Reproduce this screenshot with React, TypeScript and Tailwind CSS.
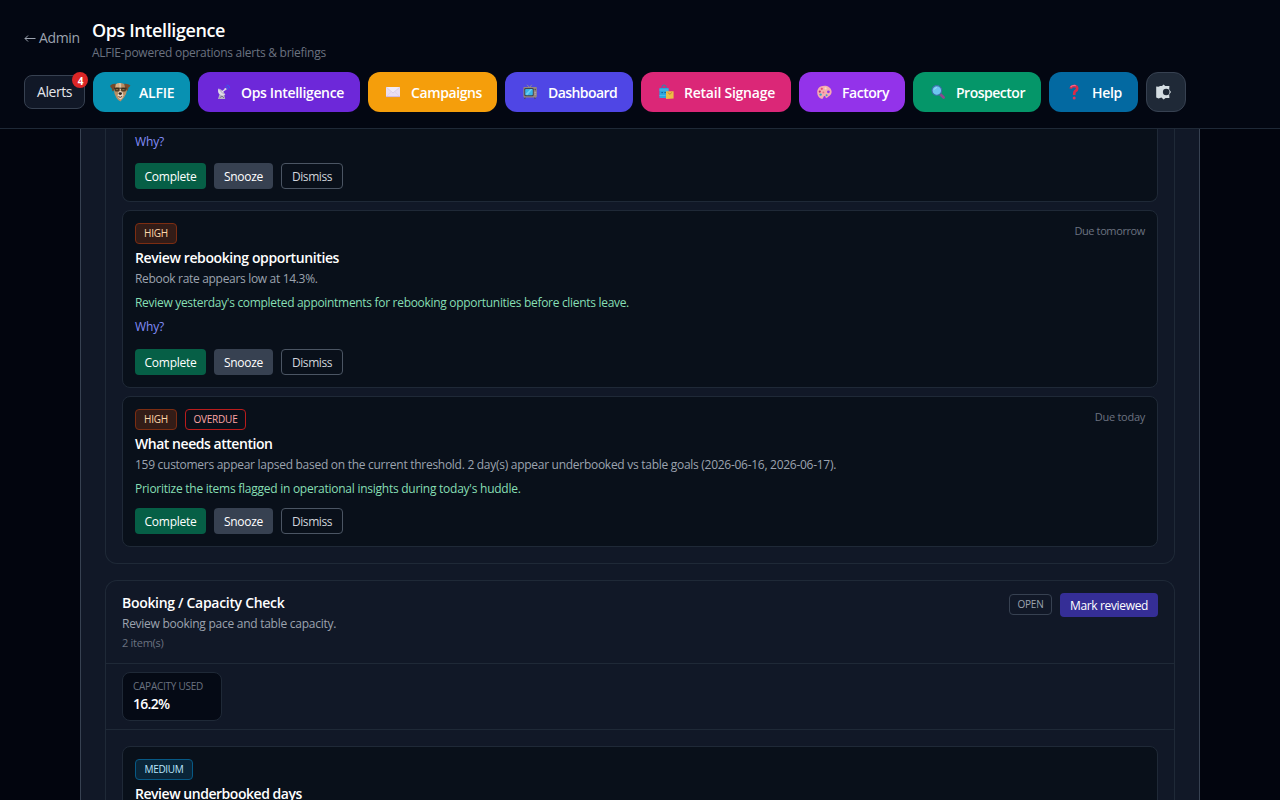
import { ReactNode } from 'react';
import clsx from 'clsx';

// Nav icons, all drawn on an 18px grid
function DogIcon() {
  return (
    <svg width="22" height="22" viewBox="0 0 22 22">
      <path d="M6.5 3.2 Q11 .8 15.5 3.2 L18 9 Q17.5 13.5 15 16.5 L11.5 20.6 Q9 19.5 7.5 17 Q5 13 5 9 Z" fill="#b98e63" />
      <path d="M6.6 3.4 Q8.4 2.2 10 2.2 L9.8 6.6 H5.8 Z" fill="#d9b185" />
      <path d="M10 2.2 Q11.2 1.8 12.2 2.4 L12 9.5 L10.4 9.5 Z" fill="#dcc7a8" />
      <path d="M6.7 2.8 Q3 2.4 1.1 4.8 Q1.4 6.4 2.6 7.2 L3.6 10.4 Q5.6 9.8 6.2 6.6 Z" fill="#73492b" />
      <path d="M15.2 2.8 Q19 2.2 21.4 4.6 Q20.6 6 19.6 6.6 L18.4 10 Q16.6 9 16 6.4 Z" fill="#7a4c2c" />
      <path d="M9.4 10.6 Q11.2 9.6 13.4 10.6 L14.4 14.4 Q13.6 17.6 11.6 18.6 Q9 17.6 8.6 14.8 Z" fill="#e6d6c2" />
      <rect x="5.6" y="6.8" width="5" height="3.6" rx="1.5" fill="#4d3d29" />
      <rect x="12" y="6.8" width="5" height="3.6" rx="1.5" fill="#4d3d29" />
      <path d="M5 7.2 H17.6" stroke="#2d2419" strokeWidth=".9" />
      <path d="M7 8.6 h2 M13.4 8.6 h2" stroke="#8d7a4b" strokeWidth=".9" />
      <ellipse cx="11.3" cy="12.6" rx="1.7" ry="1.3" fill="#2a211c" />
      <path d="M9.4 15.6 Q11.3 17.2 13.2 15.4" stroke="#5a3b2c" strokeWidth="1" fill="none" />
    </svg>
  );
}

function SatelliteIcon() {
  return (
    <svg width="18" height="18" viewBox="0 0 18 18">
      <path d="M5.6 11 L4 16 H11.2 L10 11 Z" fill="#b9b3c4" />
      <path d="M4.4 5.4 Q3.2 9.6 6 11.6 Q8.6 13.2 11.4 11.8 Z" fill="#e2dde9" />
      <path d="M4.6 5.6 Q8.6 6.6 11.2 11.6 Q7 11 4.6 5.6 Z" fill="#bcb5c9" />
      <path d="M8 9 L11 6.4" stroke="#e4e0ea" strokeWidth="1.3" />
      <circle cx="11.4" cy="6.2" r="1.1" fill="#d8d3e0" />
      <path d="M11.4 3.6 Q14 4 14 6.8 M12.6 2 Q15.6 2.2 15.8 5.2" stroke="#3b5bea" strokeWidth="1" fill="none" />
      <path d="M5.6 15 L8 13 L10 15" stroke="#6f667e" strokeWidth=".8" fill="none" />
    </svg>
  );
}

function EnvelopeIcon() {
  return (
    <svg width="18" height="18" viewBox="0 0 18 18">
      <rect x="2" y="4" width="14" height="10" fill="#e9def2" />
      <path d="M2 4 L9 10 L16 4" stroke="#d6c9e2" strokeWidth=".8" fill="#f1eaf6" />
      <path d="M2 14 L7 8.8 M16 14 L11 8.8" stroke="#dccfe8" strokeWidth=".7" />
      <path d="M2 13.6 H16" stroke="#cdb2de" strokeWidth=".9" />
    </svg>
  );
}

function TvIcon() {
  return (
    <svg width="18" height="18" viewBox="0 0 18 18">
      <path d="M6 1.8 L8.6 4.4 L10.8 1.8" stroke="#8f8f91" strokeWidth="1" fill="none" />
      <path d="M4.4 14 L3.6 16 M13.4 14 L14.2 16" stroke="#4b4b55" strokeWidth="1.2" />
      <rect x="2.4" y="4" width="13.4" height="10.4" rx=".8" fill="#96877f" />
      <rect x="3.3" y="4.9" width="9.4" height="8.4" rx="1.4" fill="#3f4250" />
      <rect x="4.2" y="5.9" width="7.6" height="6.4" rx=".8" fill="#37b5ea" />
      <path d="M4.6 11 L9.6 6 H11.4 L6.2 12.2 Z" fill="#6fd0f4" />
      <circle cx="14.2" cy="6.6" r=".8" fill="#55504f" />
      <path d="M13.4 9.4 h1.8 M13.4 11.2 h1.8" stroke="#c0b4ae" strokeWidth=".7" />
    </svg>
  );
}

function BagsIcon() {
  return (
    <svg width="18" height="18" viewBox="0 0 18 18">
      <path d="M5 5 V3.8 Q5 2 7 2 Q9 2 9 3.8 V5" stroke="#2488b8" strokeWidth="1" fill="none" />
      <path d="M2.4 5 H11.6 V15 H2.4 Z" fill="#2ba6dd" />
      <path d="M2.4 7 H11.6 M2.4 12.4 H8.6" stroke="#58bdea" strokeWidth=".9" />
      <path d="M4.4 9.6 h1.6 M7.4 9.6 h1.8" stroke="#175f93" strokeWidth="1" />
      <path d="M9 8.2 H16.6 V15.4 L9 16 Z" fill="#eebd45" />
      <path d="M11 9.4 Q12.8 13 14.6 9.4" stroke="#b98530" strokeWidth=".9" fill="none" />
    </svg>
  );
}

function PaletteIcon() {
  return (
    <svg width="18" height="18" viewBox="0 0 18 18">
      <path d="M9.4 2.8 C4.8 2.8 2.2 5.6 2.2 9.2 C2.2 13 4.8 15.8 7.2 15.8 C8.6 15.8 8 13.6 9.2 13 C10.2 12.6 10.8 13.6 10.6 14.6 C10.8 15.4 12 15 13.2 13.8 C15.2 12.4 17 10.8 16.6 8.2 C16 4.8 13 2.8 9.4 2.8 Z" fill="#f6acb0" />
      <circle cx="13.4" cy="8.8" r="1.4" fill="#9333ea" />
      <circle cx="10.6" cy="5.4" r="1.1" fill="#f5e2bd" />
      <circle cx="6.8" cy="5.8" r="1.1" fill="#e4487c" />
      <circle cx="4.8" cy="8.6" r="1.1" fill="#b92e6e" />
      <circle cx="5.6" cy="11.6" r="1.2" fill="#36a6c4" />
      <circle cx="8.4" cy="9.4" r=".9" fill="#e76d8b" />
      <circle cx="11.6" cy="12.2" r="1" fill="#3a9dc9" />
    </svg>
  );
}

function MagnifierIcon() {
  return (
    <svg width="18" height="18" viewBox="0 0 18 18">
      <path d="M11 11 L14.6 14.6" stroke="#8a4b8e" strokeWidth="2.8" strokeLinecap="round" />
      <circle cx="7.8" cy="7.4" r="4.8" fill="#6cc6f1" stroke="#3d6fa8" strokeWidth="1.1" />
      <path d="M5.2 6.6 Q6 4.8 7.8 4.6" stroke="#a6def8" strokeWidth="1" fill="none" />
    </svg>
  );
}

function QuestionIcon() {
  return (
    <svg width="18" height="18" viewBox="0 0 18 18">
      <path d="M5.8 5.6 Q6 3 9.2 3 Q12.2 3.1 12.2 5.4 Q12.2 7 10.4 8 Q9.2 8.7 9.2 12" stroke="#dc2a48" strokeWidth="2.7" fill="none" />
      <path d="M5.6 4 Q7.6 2 10.8 2.6" stroke="#ee6790" strokeWidth="1.2" fill="none" />
      <circle cx="9.2" cy="15" r="1.5" fill="#e2335a" />
    </svg>
  );
}

function ThemeIcon() {
  return (
    <svg width="18" height="18" viewBox="0 0 18 18">
      <path d="M1.2 3.6 L3.4 3.8 L5.2 3 L7 3 L8.6 1.4 L10.2 3 L14.4 3 L14.2 6.4 L16 9 L14.2 11.6 L14.4 15 L10.6 15 L8.6 16.4 L6.4 14.6 L3.6 15.4 L1.2 14.6 Z" fill="#d5dee3" />
      <circle cx="11.2" cy="9" r="3.3" fill="#1f2937" />
    </svg>
  );
}

const navItems = [
  { label: 'ALFIE', icon: <DogIcon />, box: 'w-[97px] bg-[#0891b2]', gap: 'gap-2', tracking: 'tracking-[-0.013em]' },
  { label: 'Ops Intelligence', icon: <SatelliteIcon />, box: 'w-[162px] bg-[#6d28d9]', gap: 'gap-[9px]', tracking: 'tracking-[-0.024em]' },
  { label: 'Campaigns', icon: <EnvelopeIcon />, box: 'w-[129px] bg-[#f59e0b]', gap: 'gap-[9px]', tracking: 'tracking-[-0.028em]' },
  { label: 'Dashboard', icon: <TvIcon />, box: 'w-[128px] bg-[#4f46e5]', gap: 'gap-[9px]', tracking: 'tracking-[-0.04em]' },
  { label: 'Retail Signage', icon: <BagsIcon />, box: 'w-[150px] bg-[#db2777]', gap: 'gap-[9px]', tracking: 'tracking-[-0.017em]' },
  { label: 'Factory', icon: <PaletteIcon />, box: 'w-[106px] bg-[#9333ea]', gap: 'gap-[9px]', tracking: 'tracking-[-0.032em]' },
  { label: 'Prospector', icon: <MagnifierIcon />, box: 'w-[128px] bg-[#059669]', gap: 'gap-[9px]', tracking: 'tracking-[-0.035em]' },
  { label: 'Help', icon: <QuestionIcon />, box: 'w-[89px] bg-[#0369a1]', gap: 'gap-[9px]', tracking: 'tracking-[-0.022em]' },
];

function Header() {
  return (
    <header className="h-[129px] shrink-0 border-b border-[#1f2937] bg-[#030712] px-6 pt-4">
      <div className="flex h-11 items-center gap-[11px]">
        <a className="flex w-[57px] items-center gap-[3px] whitespace-nowrap text-sm tracking-[-0.025em] text-[#9ca3af]">
          <svg width="12" height="10" viewBox="0 0 12 10" fill="none" stroke="currentColor">
            <path d="M11.5 5.5 H1 M4 2.5 L1 5.5 L4 8.5" />
          </svg>
          Admin
        </a>
        <div>
          <h1 className="h-7 text-lg leading-[29px] font-semibold tracking-[-0.022em] text-white">Ops Intelligence</h1>
          <p className="h-4 text-xs leading-[18px] tracking-[-0.022em] text-[#6b7280]">ALFIE-powered operations alerts &amp; briefings</p>
        </div>
      </div>
      <nav className="mt-3 flex items-center gap-2">
        <button className="relative h-[34px] w-[61px] rounded-lg border border-[#374151] bg-[#111827] text-sm tracking-[-0.031em] text-[#e5e7eb]">
          Alerts
          <span className="absolute -top-1 -right-1 flex h-4 w-4 items-center justify-center rounded-full bg-[#dc2626] pt-[3px] pl-px text-[10px] font-bold text-white">
            4
          </span>
        </button>
        {navItems.map((item) => (
          <button
            key={item.label}
            className={clsx('flex h-10 items-center rounded-xl pl-4 text-sm font-semibold whitespace-nowrap text-white', item.box, item.gap, item.tracking)}
          >
            {item.icon}
            <span className="pt-px">{item.label}</span>
          </button>
        ))}
        <button className="flex h-10 w-10 items-center rounded-xl border border-[#374151] bg-[#1f2937] pl-2">
          <ThemeIcon />
        </button>
      </nav>
    </header>
  );
}

function Badge({ className, children }: { className: string; children: ReactNode }) {
  return (
    <span className={clsx('flex h-[21px] items-center justify-center rounded border text-[10px] leading-[15px]', className)}>
      {children}
    </span>
  );
}

const high = 'w-[42px] border-[#7c2d12] bg-[#331c17] text-[#fed7aa] tracking-[-0.02em]';
const overdue = 'w-[61px] border-[#b91c1c] text-[#fca5a5] tracking-[-0.022em]';
const medium = 'w-[58px] border-[#075985] bg-[#0a2538] text-[#bae6fd] tracking-[-0.031em]';

function Actions({ className }: { className?: string }) {
  return (
    <div className={clsx('flex gap-2 text-xs', className)}>
      <button className="h-[26px] w-[71px] rounded bg-[#065f46] pt-0.5 tracking-[-0.021em] text-white">Complete</button>
      <button className="h-[26px] w-[59px] rounded bg-[#374151] pt-0.5 tracking-[-0.024em] text-white">Snooze</button>
      <button className="h-[26px] w-[62px] rounded border border-[#4b5563] pt-0.5 tracking-[-0.036em] text-[#d1d5db]">Dismiss</button>
    </div>
  );
}

type TaskProps = {
  badges: ReactNode;
  due?: ReactNode;
  title: string;
  titleClass?: string;
  children?: ReactNode;
};

function Task({ badges, due, title, titleClass, children }: TaskProps) {
  return (
    <article className="rounded-lg border border-[#1f2937] bg-[#09101a] p-3">
      <div className="flex items-start justify-between">
        <div className="flex gap-2">{badges}</div>
        {due}
      </div>
      <h3 className={clsx('mt-1 text-sm font-semibold text-white', titleClass)}>{title}</h3>
      {children}
    </article>
  );
}

export default function App() {
  return (
    <div className="flex h-screen flex-col overflow-hidden bg-[#02050e] font-['Open_Sans','Noto_Sans',sans-serif]">
      <Header />
      <main className="mx-auto flex min-h-0 w-[1120px] flex-1 flex-col overflow-hidden border-x border-[#374151] bg-[#111827] px-6">
        <section className="shrink-0 rounded-b-xl border-x border-b border-[#1f2937] px-4 pb-4">
          <div className="h-[73px] rounded-b-lg border-x border-b border-[#1f2937] bg-[#09101a] px-3 pt-1">
            <button className="block h-4 text-xs leading-[17px] tracking-[-0.013em] text-[#818cf8]">Why?</button>
            <Actions className="mt-3.5" />
          </div>
          <div className="mt-2 flex flex-col gap-2">
            <Task
              badges={<Badge className={high}>HIGH</Badge>}
              due={<span className="text-[11px] leading-4 tracking-[-0.035em] text-[#6b7280]">Due tomorrow</span>}
              title="Review rebooking opportunities"
              titleClass="tracking-[-0.028em]"
            >
              <p className="mt-0.5 h-4 text-xs leading-[18px] tracking-[-0.0265em] text-[#9ca3af]">Rebook rate appears low at 14.3%.</p>
              <p className="mt-2 h-4 text-xs leading-[18px] tracking-[-0.0255em] text-[#86dfb4]">
                Review yesterday's completed appointments for rebooking opportunities before clients leave.
              </p>
              <button className="mt-2 block h-4 text-xs leading-[18px] tracking-[-0.013em] text-[#818cf8]">Why?</button>
              <Actions className="mt-[15px]" />
            </Task>
            <Task
              badges={
                <>
                  <Badge className={high}>HIGH</Badge>
                  <Badge className={overdue}>OVERDUE</Badge>
                </>
              }
              due={<span className="text-[11px] leading-4 tracking-[-0.025em] text-[#6b7280]">Due today</span>}
              title="What needs attention"
              titleClass="tracking-[-0.033em]"
            >
              <p className="mt-0.5 h-4 text-xs leading-[18px] tracking-[-0.0232em] text-[#9ca3af]">
                159 customers appear lapsed based on the current threshold. 2 day(s) appear underbooked vs table goals (2026-06-16, 2026-06-17).
              </p>
              <p className="mt-2 h-4 text-xs leading-[18px] tracking-[-0.0212em] text-[#86dfb4]">
                Prioritize the items flagged in operational insights during today's huddle.
              </p>
              <Actions className="mt-3" />
            </Task>
          </div>
        </section>

        <section className="mt-4 shrink-0 rounded-t-xl border-x border-t border-[#1f2937]">
          <div className="flex h-[83px] items-start justify-between border-b border-[#1f2937] px-4 pt-3">
            <div>
              <h2 className="text-sm font-semibold tracking-[-0.022em] text-white">Booking / Capacity Check</h2>
              <p className="mt-0.5 h-4 text-xs leading-[18px] tracking-[-0.022em] text-[#9ca3af]">Review booking pace and table capacity.</p>
              <p className="mt-1 text-[11px] leading-4 tracking-[-0.025em] text-[#6b7280]">2 item(s)</p>
            </div>
            <div className="flex items-start gap-2">
              <Badge className="mt-px w-[43px] border-[#374151] tracking-[-0.022em] text-[#9ca3af]">OPEN</Badge>
              <button className="h-6 w-[98px] rounded bg-[#352e96] pt-0.5 text-xs tracking-[-0.029em] text-white">Mark reviewed</button>
            </div>
          </div>
          <div className="border-b border-[#1f2937] px-4 py-2">
            <div className="h-[49px] w-[100px] rounded-lg border border-[#1f2937] bg-[#050a15] px-2.5 py-1.5">
              <div className="text-[10px] leading-[15px] tracking-[-0.025em] whitespace-nowrap text-[#6b7280]">CAPACITY USED</div>
              <div className="text-sm font-semibold tracking-[-0.05em] text-white">16.2%</div>
            </div>
          </div>
          <div className="p-4">
            <Task
              badges={<Badge className={medium}>MEDIUM</Badge>}
              title="Review underbooked days"
              titleClass="pb-12 tracking-[-0.033em]"
            />
          </div>
        </section>
      </main>
    </div>
  );
}
